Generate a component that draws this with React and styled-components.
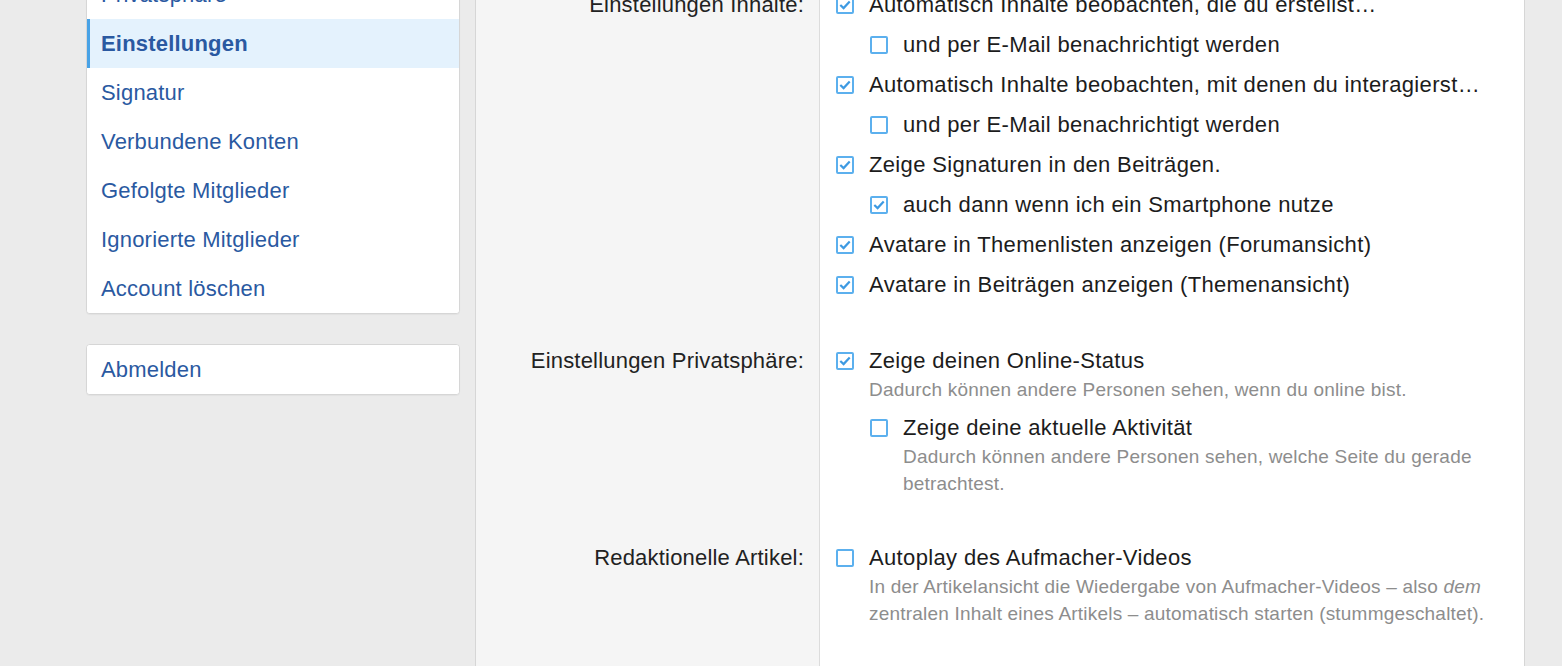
import styled, { createGlobalStyle } from "styled-components";

const GlobalStyle = createGlobalStyle`
  html, body {
    margin: 0;
    padding: 0;
    background: #ebebeb;
    font-family: "Liberation Sans", Arial, sans-serif;
    overflow: hidden;
  }
`;

const menu = [
  { label: "Privatsphäre" },
  { label: "Einstellungen", active: true },
  { label: "Signatur" },
  { label: "Verbundene Konten" },
  { label: "Gefolgte Mitglieder" },
  { label: "Ignorierte Mitglieder" },
  { label: "Account löschen" },
];

const sections = [
  {
    title: "Einstellungen Inhalte:",
    options: [
      { text: "Automatisch Inhalte beobachten, die du erstellst…", checked: true },
      { text: "und per E-Mail benachrichtigt werden", nested: true },
      { text: "Automatisch Inhalte beobachten, mit denen du interagierst…", checked: true },
      { text: "und per E-Mail benachrichtigt werden", nested: true },
      { text: "Zeige Signaturen in den Beiträgen.", checked: true },
      { text: "auch dann wenn ich ein Smartphone nutze", nested: true, checked: true },
      { text: "Avatare in Themenlisten anzeigen (Forumansicht)", checked: true },
      { text: "Avatare in Beiträgen anzeigen (Themenansicht)", checked: true },
    ],
  },
  {
    title: "Einstellungen Privatsphäre:",
    options: [
      {
        text: "Zeige deinen Online-Status",
        checked: true,
        hint: "Dadurch können andere Personen sehen, wenn du online bist.",
      },
      {
        text: "Zeige deine aktuelle Aktivität",
        nested: true,
        hint: "Dadurch können andere Personen sehen, welche Seite du gerade betrachtest.",
      },
    ],
  },
  {
    title: "Redaktionelle Artikel:",
    last: true,
    options: [
      {
        text: "Autoplay des Aufmacher-Videos",
        hint: (
          <>
            In der Artikelansicht die Wiedergabe von Aufmacher-Videos – also <em>dem</em>{" "}
            zentralen Inhalt eines Artikels – automatisch starten (stummgeschaltet).
          </>
        ),
      },
    ],
  },
];

const Page = styled.div`
  display: flex;
  align-items: flex-start;
  gap: 15px;
  padding-left: 86px;
  margin-top: -31px;
`;

const Sidebar = styled.aside`
  width: 374px;
  flex-shrink: 0;
  display: flex;
  flex-direction: column;
  gap: 30px;
`;

const MenuBox = styled.nav`
  background: #fff;
  border: 1px solid #d6d6d6;
  border-radius: 4px;
  box-shadow: 0 1px 1px rgba(0, 0, 0, 0.04);
  overflow: hidden;
`;

const MenuItem = styled.a`
  display: flex;
  align-items: center;
  height: 49px;
  padding-left: 14px;
  font-size: 22px;
  letter-spacing: 0.2px;
  color: #2a59a1;
  text-decoration: none;
  font-weight: ${(p) => (p.$active ? 700 : 400)};
  background: ${(p) => (p.$active ? "#e4f2fd" : "#fff")};
  box-shadow: ${(p) => (p.$active ? "inset 3px 0 0 #48a2e6" : "none")};
`;

const Main = styled.main`
  width: 1048px;
  flex-shrink: 0;
  border: 1px solid #d6d6d6;
  background: #fff;
`;

const Section = styled.section`
  display: grid;
  grid-template-columns: 344px 1fr;
`;

const Label = styled.div`
  background: #f5f5f5;
  border-right: 1px solid #dcdcdc;
  padding: 20px 15px ${(p) => (p.$last ? "120px" : "26px")} 0;
  text-align: right;
  font-size: 22px;
  letter-spacing: 0.2px;
  line-height: 30px;
  color: #222;
`;

const Options = styled.div`
  display: flex;
  flex-direction: column;
  gap: 10px;
  padding: 20px 28px 26px 16px;
`;

const Option = styled.label`
  display: flex;
  align-items: flex-start;
  gap: 15px;
  margin-left: ${(p) => (p.$nested ? "34px" : "0")};
`;

const Box = styled.span`
  width: 18px;
  height: 18px;
  margin-top: 6px;
  flex-shrink: 0;
  display: flex;
  align-items: center;
  justify-content: center;
  box-sizing: border-box;
  border: 2px solid #5cb0ee;
  border-radius: 2px;
  background: #fff;
`;

const OptionBody = styled.div`
  display: flex;
  flex-direction: column;
`;

const OptionText = styled.span`
  font-size: 22px;
  letter-spacing: 0.35px;
  line-height: 30px;
  color: #1c1c1c;
`;

const Hint = styled.span`
  font-size: 19px;
  letter-spacing: 0.2px;
  line-height: 27px;
  color: #8d8d8d;
`;

function Checkbox({ checked }) {
  return (
    <Box>
      {checked && (
        <svg width="12" height="10" viewBox="0 0 12 10">
          <path d="M1.3 5 L4.6 8.1 L10.7 1.6" fill="none" stroke="#3d9ae2" strokeWidth="2.2" />
        </svg>
      )}
    </Box>
  );
}

export default function App() {
  return (
    <>
      <GlobalStyle />
      <Page>
        <Sidebar>
          <MenuBox>
            {menu.map((m) => (
              <MenuItem key={m.label} $active={m.active}>
                {m.label}
              </MenuItem>
            ))}
          </MenuBox>
          <MenuBox>
            <MenuItem>Abmelden</MenuItem>
          </MenuBox>
        </Sidebar>
        <Main>
          {sections.map((s) => (
            <Section key={s.title}>
              <Label $last={s.last}>{s.title}</Label>
              <Options>
                {s.options.map((o, i) => (
                  <Option key={i} $nested={o.nested}>
                    <Checkbox checked={o.checked} />
                    <OptionBody>
                      <OptionText>{o.text}</OptionText>
                      {o.hint && <Hint>{o.hint}</Hint>}
                    </OptionBody>
                  </Option>
                ))}
              </Options>
            </Section>
          ))}
        </Main>
      </Page>
    </>
  );
}
